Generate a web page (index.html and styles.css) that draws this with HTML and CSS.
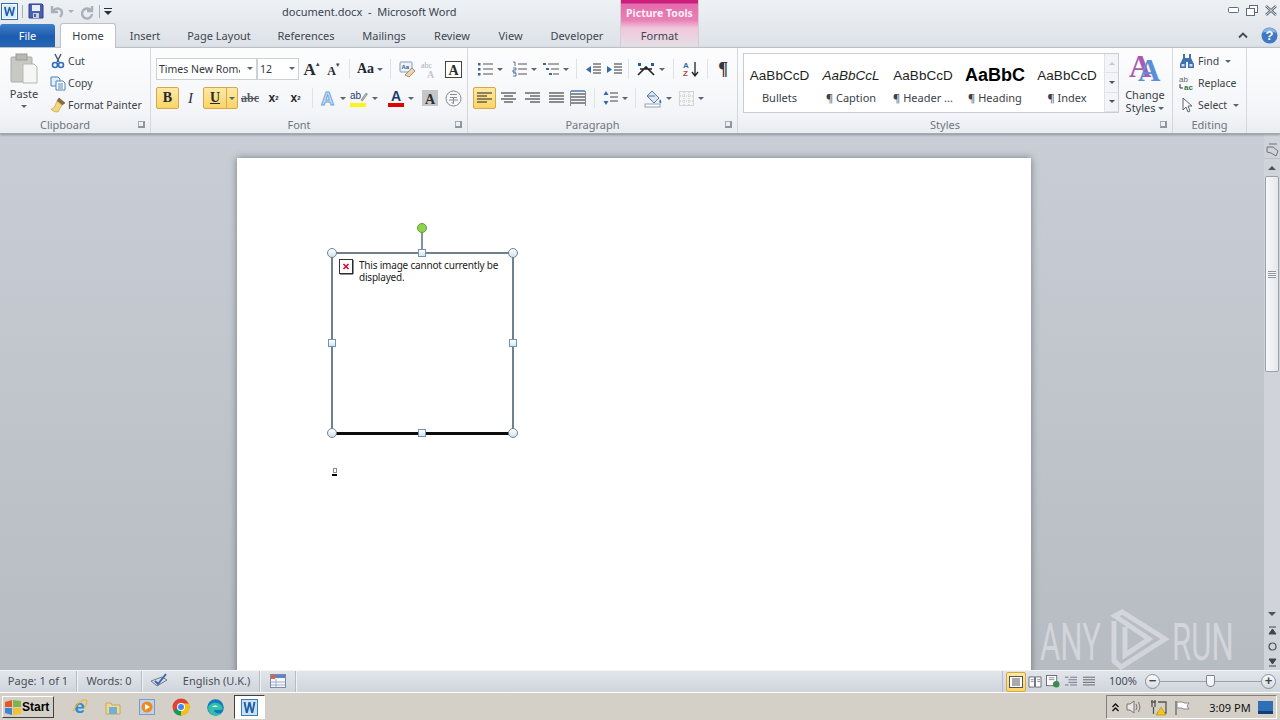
FILE: index.html
```html
<!DOCTYPE html>
<html lang="en">
<head>
    <meta charset="UTF-8">
    <title>document.docx - Microsoft Word</title>
    <link rel="stylesheet" href="styles.css">
</head>
<body>
    <div class="app">
        <div class="chrome">
            <div class="titlebar">
                <div class="qat">
                    <svg class="q-word" width="17" height="17" viewBox="0 0 17 17"><rect x=".5" y=".5" width="16" height="16" fill="#fff" stroke="#2a6fb5"/><rect x="2" y="2" width="13" height="13" fill="#dbe9f7"/><path d="M3 4l2 9h1.600L8.500 7l1.900 6H12l2-9h-1.700l-1.200 6-1.900-6H7.900L6 10 4.800 4z" fill="#1b5fa8"/></svg>
                    <span class="q-sep"></span>
                    <svg class="q-save" width="16" height="16" viewBox="0 0 16 16"><path d="M1 1h13l1 1v13H1z" fill="#4a5fb0" stroke="#2e3f86"/><rect x="4" y="2" width="8" height="6" fill="#e8eef8"/><rect x="5" y="10" width="6" height="5" fill="#c8d0e0"/><rect x="6" y="11" width="2" height="3" fill="#4a5fb0"/></svg>
                    <svg class="q-undo" width="15" height="15" viewBox="0 0 15 15"><path d="M2 2v6h6M3 7c3-4 9-3 9 2 0 2-1 3-2 4" fill="none" stroke="#a9b0b8" stroke-width="2.400"/></svg>
                    <span class="caret q-caret"></span>
                    <svg class="q-redo" width="15" height="15" viewBox="0 0 15 15"><path d="M12 2v5H7M11 6.500A5 5 0 1 0 12 10" fill="none" stroke="#a9b0b8" stroke-width="2.400"/></svg>
                    <span class="q-sep"></span>
                    <svg class="q-more" width="8" height="9" viewBox="0 0 8 9"><path d="M0 1h8v1H0zM0 4h8L4 8z" fill="#27303c"/></svg>
                </div>
                <div class="title">document.docx &nbsp;-&nbsp; Microsoft Word</div>
                <div class="window-btns">
                    <svg width="11" height="6" viewBox="0 0 11 6"><rect x=".5" y=".5" width="10" height="5" rx="1" fill="#fff" stroke="#5f6b7a"/></svg>
                    <svg width="12" height="11" viewBox="0 0 12 11"><rect x="3.500" y=".5" width="8" height="7" fill="#fff" stroke="#5f6b7a"/><rect x=".5" y="3.500" width="8" height="7" fill="#fff" stroke="#5f6b7a"/></svg>
                    <svg width="12" height="11" viewBox="0 0 12 11"><path d="M1 1l10 9M11 1L1 10" stroke="#5f6b7a" stroke-width="2.600"/><path d="M1 1l10 9M11 1L1 10" stroke="#fff" stroke-width=".8"/></svg>
                </div>
            </div>

            <div class="tabs">
                <div class="tab tab-file">File</div>
                <div class="tab tab-home">Home</div>
                <div class="tab tab-insert">Insert</div>
                <div class="tab tab-layout">Page Layout</div>
                <div class="tab tab-refs">References</div>
                <div class="tab tab-mail">Mailings</div>
                <div class="tab tab-review">Review</div>
                <div class="tab tab-view">View</div>
                <div class="tab tab-dev">Developer</div>
                <div class="tab tab-format">
                    <span class="context-label">Picture Tools</span>
                    <span>Format</span>
                </div>
                <div class="tabs-right">
                    <svg width="10" height="7" viewBox="0 0 10 7"><path d="M1 5.500l4-4 4 4" fill="none" stroke="#3f4a58" stroke-width="1.800"/></svg>
                    <svg width="17" height="17" viewBox="0 0 17 17"><circle cx="8.500" cy="8.500" r="8" fill="#3f79c6"/><path d="M8.500 1a7.500 7.500 0 0 1 7 5c-4-2-10-2-14 0a7.500 7.500 0 0 1 7-5z" fill="#8db6e6"/><text x="8.500" y="13" class="help-mark">?</text></svg>
                </div>
            </div>

            <div class="ribbon">
                <div class="group g-clip">
                    <div class="group-body clip-body">
                        <div class="big-btn paste">
                            <svg width="28" height="31" viewBox="0 0 28 31"><rect x="1" y="4" width="21" height="25" rx="1" fill="#c9c9c4" stroke="#aaa"/><rect x="6" y="1" width="11" height="6" fill="#b8b8b2" stroke="#999"/><path d="M13 11h11l3 3v16H13z" fill="#f6f6f4" stroke="#b5b5b5"/></svg>
                            <span>Paste</span>
                            <span class="caret"></span>
                        </div>
                        <div class="small-col">
                            <div class="small-btn"><svg width="16" height="16" viewBox="0 0 16 16"><path d="M5 1l4 8M11 1L7 9" stroke="#4c5a6c" stroke-width="1.500"/><circle cx="5" cy="12" r="2.500" fill="none" stroke="#2e6fc0" stroke-width="1.600"/><circle cx="11" cy="12" r="2.500" fill="none" stroke="#2e6fc0" stroke-width="1.600"/></svg><span>Cut</span></div>
                            <div class="small-btn"><svg width="16" height="16" viewBox="0 0 16 16"><path d="M1 2h7l2 2v7H1z" fill="#e4eefa" stroke="#4f81bd"/><path d="M6 6h7l2 2v7H6z" fill="#fff" stroke="#4f81bd"/><path d="M8 9h5M8 11h5M8 13h5" stroke="#4f81bd"/></svg><span>Copy</span></div>
                            <div class="small-btn"><svg width="16" height="16" viewBox="0 0 16 16"><path d="M9 1l6 5-3 2-5-4z" fill="#8b6a3e" stroke="#6a5030" stroke-width=".6"/><path d="M7 4l5 4-4 7c-3 0-6-1-7-3 3 0 4-3 6-8z" fill="#f2d67c" stroke="#b8923a" stroke-width=".6"/></svg><span>Format Painter</span></div>
                        </div>
                    </div>
                    <div class="group-label has-launcher">Clipboard<i class="launcher"></i></div>
                </div>

                <div class="group g-font">
                    <div class="group-body rows">
                        <div class="row">
                            <div class="combo combo-font"><span>Times New Roma</span><b class="caret"></b></div>
                            <div class="combo combo-size"><span>12</span><b class="caret"></b></div>
                            <div class="tb w26 glyph serif-b big">A<sup class="tiny">▲</sup></div>
                            <div class="tb w18 glyph serif-b small-a">A<sup class="tiny">▼</sup></div>
                            <span class="sep"></span>
                            <div class="tb w28 glyph serif-b mid">Aa<b class="caret"></b></div>
                            <span class="sep"></span>
                            <div class="tb w20"><svg width="17" height="17" viewBox="0 0 17 17"><rect x="1" y="1" width="12" height="10" rx="1" fill="#eef3fa" stroke="#7f9cc4"/><path d="M6 14l7-7 3 3-6 6z" fill="#e9d9a0" stroke="#a88"/><text x="2.500" y="8" class="nano">Aa</text></svg></div>
                            <div class="tb w24"><svg width="17" height="17" viewBox="0 0 17 17"><text x="0" y="7" class="pale-abc">abc</text><text x="6" y="17" class="pale-a">A</text></svg></div>
                            <div class="tb w24"><svg width="17" height="17" viewBox="0 0 17 17"><rect x=".5" y=".5" width="16" height="16" fill="#fff" stroke="#444"/><text x="8.500" y="13.500" class="boxed-a">A</text></svg></div>
                        </div>
                        <div class="row">
                            <div class="tb w23 on glyph serif-b">B</div>
                            <div class="tb w23 glyph italic">I</div>
                            <div class="tb w35 on split ml1"><u class="glyph serif-b">U</u><b class="split-arrow"><span class="caret"></span></b></div>
                            <div class="tb w24 glyph strike">abc</div>
                            <div class="tb w23 glyph boldx">x<sub>2</sub></div>
                            <div class="tb w21 glyph boldx">x<sup>2</sup></div>
                            <span class="sep"></span>
                            <div class="tb w26"><svg width="17" height="17" viewBox="0 0 17 17"><text x="8.500" y="15" class="glow-a">A</text></svg><b class="caret"></b></div>
                            <div class="tb w38"><svg width="18" height="18" viewBox="0 0 18 18"><text x="0" y="10" class="ab-mark">ab</text><path d="M11 11l5-7 1.500 1-5 7z" fill="#b4b4b4" stroke="#666" stroke-width=".5"/><rect y="14" width="16" height="4" fill="#fbf31b"/></svg><b class="caret"></b></div>
                            <div class="tb w36"><svg width="16" height="18" viewBox="0 0 16 18"><text x="8" y="12" class="color-a">A</text><rect y="14" width="16" height="4" fill="#e00000"/></svg><b class="caret"></b></div>
                            <div class="tb w22"><svg width="16" height="16" viewBox="0 0 16 16"><rect width="16" height="16" fill="#c6c6c6"/><text x="8" y="13.500" class="shade-a">A</text></svg></div>
                            <div class="tb w24"><svg width="17" height="17" viewBox="0 0 17 17"><circle cx="8.500" cy="8.500" r="7.500" fill="none" stroke="#8a8a8a"/><path d="M5 4.500h7M5 7.500h7M8.500 7.500v6l-2-1M4 10h9" fill="none" stroke="#8a8a8a"/></svg></div>
                        </div>
                    </div>
                    <div class="group-label has-launcher">Font<i class="launcher"></i></div>
                </div>

                <div class="group g-para">
                    <div class="group-body rows">
                        <div class="row">
                            <div class="tb w34"><svg width="15" height="14" viewBox="0 0 15 14"><path d="M5 2h10M5 7h10M5 12h10" stroke="#555"/><path d="M0 1h2.500v2.500H0zM0 6h2.500v2.500H0zM0 11h2.500v2.500H0z" fill="#40658f"/></svg><b class="caret"></b></div>
                            <div class="tb w34"><svg width="15" height="15" viewBox="0 0 15 15"><path d="M6 2h9M6 7h9M6 12h9" stroke="#555"/><path d="M1 0h2v4M1 6h3v2H1v2h3M1 11h3v3H1" fill="none" stroke="#40658f" stroke-width=".9"/></svg><b class="caret"></b></div>
                            <div class="tb w29"><svg width="16" height="15" viewBox="0 0 16 15"><path d="M5 2h11M8 7h8M10 12h6" stroke="#555"/><path d="M0 1h3v2H0zM3 6h3v2H3zM6 11h3v2H6z" fill="#40658f"/></svg><b class="caret"></b></div>
                            <span class="sep"></span>
                            <div class="tb w20"><svg width="16" height="13" viewBox="0 0 16 13"><path d="M8 1h8M8 4h8M8 7h8M8 10h8" stroke="#333" stroke-width="1.200"/><path d="M6 3L1 6.500 6 10z" fill="#2f6ab0"/></svg></div>
                            <div class="tb w22"><svg width="16" height="13" viewBox="0 0 16 13"><path d="M8 1h8M8 4h8M8 7h8M8 10h8" stroke="#333" stroke-width="1.200"/><path d="M1 3l5 3.500L1 10z" fill="#2f6ab0"/></svg></div>
                            <span class="sep sl3"></span>
                            <div class="tb w32"><svg width="18" height="14" viewBox="0 0 18 14"><path d="M1 13L9 5l8 8M3 7h12" fill="none" stroke="#222" stroke-width="1.600"/><path d="M1 1h3v3H1zM14 1h3v3h-3z" fill="#1f5fa8"/></svg><b class="caret"></b></div>
                            <span class="sep"></span>
                            <div class="tb w21"><svg width="16" height="16" viewBox="0 0 16 16"><text x="0" y="7" class="az-a">A</text><text x="0" y="15" class="az-z">Z</text><path d="M12 1v13M9 11l3 4 3-4" fill="none" stroke="#222" stroke-width="1.300"/></svg></div>
                            <span class="sep"></span>
                            <div class="tb w18 glyph pilcrow">¶</div>
                        </div>
                        <div class="row">
                            <div class="tb w23 on"><svg width="15" height="12" viewBox="0 0 15 12"><path d="M0 1h15M0 4h10M0 7h15M0 10h10" stroke="#222"/></svg></div>
                            <div class="tb w24"><svg width="15" height="12" viewBox="0 0 15 12"><path d="M0 1h15M3 4h9M0 7h15M3 10h9" stroke="#222"/></svg></div>
                            <div class="tb w24"><svg width="15" height="12" viewBox="0 0 15 12"><path d="M0 1h15M5 4h10M0 7h15M5 10h10" stroke="#222"/></svg></div>
                            <div class="tb w24"><svg width="15" height="12" viewBox="0 0 15 12"><path d="M0 1h15M0 4h15M0 7h15M0 10h15" stroke="#222"/></svg></div>
                            <div class="tb w20"><svg width="16" height="16" viewBox="0 0 16 16"><path d="M1 4h14M1 7h14M1 10h14M1 13h14" stroke="#222"/><path d="M1 1h14" stroke="#3a70b0" stroke-width="1.400"/><path d="M.5 1v15M15.500 1v15" stroke="#888"/></svg></div>
                            <span class="sep"></span>
                            <div class="tb w28"><svg width="15" height="16" viewBox="0 0 15 16"><path d="M7 3h8M7 7h8M7 11h8" stroke="#444"/><path d="M3 1L.5 5h5zM3 15L.5 11h5z" fill="#2f6ab0"/></svg><b class="caret"></b></div>
                            <span class="sep"></span>
                            <div class="tb w32"><svg width="18" height="17" viewBox="0 0 18 17"><path d="M8 1l7 7-5 5-7-7z" fill="#dfe7f2" stroke="#5577a8"/><path d="M3 6l8 0" stroke="#5577a8"/><path d="M16 9c1 2 2 3 1 4-2 1-2-2-1-4z" fill="#2e6fc0"/><rect x="1" y="14" width="15" height="3" fill="#fff" stroke="#90a0b4"/></svg><b class="caret"></b></div>
                            <div class="tb w34"><svg width="15" height="15" viewBox="0 0 15 15"><rect x=".5" y=".5" width="14" height="14" fill="#f6f6f6" stroke="#b5b5b5" stroke-dasharray="1 1"/><path d="M5 1v13M10 1v13M1 5h13M1 10h13" stroke="#c4c4c4" stroke-dasharray="1 1"/></svg><b class="caret"></b></div>
                        </div>
                    </div>
                    <div class="group-label has-launcher">Paragraph<i class="launcher"></i></div>
                </div>

                <div class="group g-styles">
                    <div class="group-body styles-body">
                        <div class="gallery">
                            <div class="style-item"><span class="preview">AaBbCcD</span><span class="style-name">Bullets</span></div>
                            <div class="style-item"><span class="preview caption">AaBbCcL</span><span class="style-name">¶ Caption</span></div>
                            <div class="style-item"><span class="preview">AaBbCcD</span><span class="style-name">¶ Header ...</span></div>
                            <div class="style-item"><span class="preview heading">AaBbC</span><span class="style-name">¶ Heading</span></div>
                            <div class="style-item"><span class="preview">AaBbCcD</span><span class="style-name">¶ Index</span></div>
                            <div class="gallery-scroll">
                                <span><i class="tri-up"></i></span>
                                <span><i class="tri-down"></i></span>
                                <span><i class="tri-more"></i></span>
                            </div>
                        </div>
                        <div class="big-btn change-styles">
                            <svg width="32" height="28" viewBox="0 0 32 28"><text x="0" y="23" class="aa-back">A</text><text x="9" y="27" class="aa-front">A</text></svg>
                            <span>Change</span>
                            <span>Styles <b class="caret"></b></span>
                        </div>
                    </div>
                    <div class="group-label has-launcher">Styles<i class="launcher"></i></div>
                </div>

                <div class="group g-edit">
                    <div class="group-body small-col">
                        <div class="small-btn"><svg width="16" height="14" viewBox="0 0 16 14"><path d="M4 0h2v4h4V0h2v4l3 6v4H9V8H7v6H1v-4l3-6z" fill="#3f6fb5"/><path d="M2.500 10h3v2.500h-3zM10.500 10h3v2.500h-3z" fill="#cfe0f5"/></svg><span>Find</span><b class="caret"></b></div>
                        <div class="small-btn"><svg width="16" height="16" viewBox="0 0 16 16"><text x="0" y="7" class="rep-ab">ab</text><text x="5" y="15" class="rep-ac">ac</text><path d="M1 9v4h3" fill="none" stroke="#333"/></svg><span>Replace</span></div>
                        <div class="small-btn"><svg width="16" height="16" viewBox="0 0 16 16"><path d="M4 1v12l3-3 2 5 2-1-2-5h4z" fill="#fff" stroke="#5a6470"/></svg><span>Select</span><b class="caret"></b></div>
                    </div>
                    <div class="group-label">Editing</div>
                </div>
            </div>
        </div>

        <div class="workspace">
            <div class="canvas">
                <div class="page">
                    <div class="picture">
                        <svg class="broken" width="15" height="15" viewBox="0 0 15 15"><rect x=".5" y=".5" width="13" height="14" fill="#fdfdfd" stroke="#333"/><path d="M14 1v14H1" fill="none" stroke="#222"/><path d="M4.500 5l5 5M9.500 5l-5 5" stroke="#d01030" stroke-width="1.600"/></svg>
                        <p class="alt-text">This image cannot currently be displayed.</p>
                        <i class="rotate-stem"></i>
                        <i class="rotate-handle"></i>
                        <i class="h-round h-tl"></i>
                        <i class="h-round h-tr"></i>
                        <i class="h-round h-bl"></i>
                        <i class="h-round h-br"></i>
                        <i class="h-square h-tm"></i>
                        <i class="h-square h-ml"></i>
                        <i class="h-square h-mr"></i>
                        <i class="h-square h-bm"></i>
                    </div>
                    <div class="para-mark"><i></i><b></b></div>
                </div>
                <svg class="watermark" width="194" height="62" viewBox="0 0 194 62">
                    <text x="0" y="50" class="wm-text" transform="translate(0 0) scale(.6 1)">ANY</text>
                    <path d="M74 11l0 40 7 6 44-28L82 2l-7 4 34 23-24 16V17" fill="none" stroke="#fff" stroke-opacity=".38" stroke-width="5"/>
                    <text x="0" y="50" class="wm-text" transform="translate(132 0) scale(.6 1)">RUN</text>
                </svg>
            </div>
            <div class="vscroll">
                <span class="ruler-toggle"><svg width="13" height="15" viewBox="0 0 13 15"><path d="M3 1h8M1 4h6l5 4-2 5-5-3-4-1z" fill="none" stroke="#6b7480"/></svg></span>
                <span class="sb-btn"><i class="sb-up"></i></span>
                <div class="sb-thumb"><i class="sb-grip"></i></div>
                <div class="sb-track"></div>
                <span class="sb-btn"><i class="sb-down"></i></span>
                <span class="sb-nav"><svg width="9" height="9" viewBox="0 0 9 9"><path d="M1 1h7M1 8l3.500-5L8 8z" fill="#3e4652" stroke="#3e4652"/></svg></span>
                <span class="sb-nav"><svg width="9" height="9" viewBox="0 0 9 9"><circle cx="4.500" cy="4.500" r="3.500" fill="none" stroke="#4a5360" stroke-width="1.200"/></svg></span>
                <span class="sb-nav"><svg width="9" height="9" viewBox="0 0 9 9"><path d="M1 8h7M1 1l3.500 5L8 1z" fill="#3e4652" stroke="#3e4652"/></svg></span>
            </div>
        </div>

        <div class="statusbar">
            <div class="st-cell st-page">Page: 1 of 1</div>
            <div class="st-cell st-words">Words: 0</div>
            <div class="st-cell st-proof"><svg width="18" height="16" viewBox="0 0 18 16"><path d="M1 8l11-4 5 3-10 6z" fill="#d8dde6" stroke="#6f7c90"/><path d="M5 8l3 3 8-10" fill="none" stroke="#3a68a8" stroke-width="2"/></svg></div>
            <div class="st-cell st-lang">English (U.K.)</div>
            <div class="st-cell st-macro"><svg width="16" height="14" viewBox="0 0 16 14"><rect x=".5" y=".5" width="15" height="13" fill="#f8f8fb" stroke="#7b8aa8"/><rect x="1" y="1" width="14" height="3" fill="#5f86c4"/><path d="M6 5v8M1 8h14M1 11h14" stroke="#9fb0cc"/><rect x="1" y="1" width="4" height="4" fill="#e2603a"/></svg></div>
            <div class="st-fill"></div>
            <div class="view-btns">
                <span class="view-btn on"><svg width="14" height="12" viewBox="0 0 14 12"><rect x=".5" y=".5" width="13" height="11" fill="#fff" stroke="#555"/><path d="M3 3h8M3 5h8M3 7h8M3 9h8" stroke="#555"/></svg></span>
                <span class="view-btn"><svg width="14" height="12" viewBox="0 0 15 13"><path d="M1 1h6v11H1zM8 1h6v11H8z" fill="#fff" stroke="#667"/><path d="M3 4h3M3 6h3M10 4h3M10 6h3" stroke="#889"/></svg></span>
                <span class="view-btn"><svg width="14" height="13" viewBox="0 0 15 14"><rect x=".5" y=".5" width="11" height="11" fill="#fff" stroke="#667"/><path d="M3 3h6M3 5h6" stroke="#889"/><circle cx="11" cy="10" r="3.500" fill="#3c8a4c"/></svg></span>
                <span class="view-btn"><svg width="12" height="11" viewBox="0 0 14 12"><path d="M0 1h4M4 4h10M4 7h10M0 10h4M6 1h8M6 10h8" stroke="#667"/></svg></span>
                <span class="view-btn"><svg width="12" height="11" viewBox="0 0 14 12"><path d="M0 1h14M0 4h14M0 7h14M0 10h14" stroke="#555"/></svg></span>
            </div>
            <div class="zoom-pct">100%</div>
            <div class="zoom-round">−</div>
            <div class="zoom-track"><i class="zoom-thumb"></i></div>
            <div class="zoom-round">+</div>
        </div>

        <div class="taskbar">
            <div class="start"><svg width="17" height="15" viewBox="0 0 17 15"><path d="M1 2l7-2v7H1z" fill="#e2582c"/><path d="M9 0l8 1v6H9z" fill="#7ab648"/><path d="M1 8h7v7l-7-2z" fill="#3f83d6"/><path d="M9 8h8v6l-8 1z" fill="#f2c230"/></svg><span>Start</span></div>
            <div class="launch ie"><svg width="17" height="18" viewBox="0 0 17 18"><text x="8.500" y="15" class="ie-e">e</text><path d="M2 13C6 5 12 1 15 2c2 1 0 5-2 8" fill="none" stroke="#f0b429" stroke-width="1.200"/></svg></div>
            <div class="launch folder"><svg width="16" height="15" viewBox="0 0 16 15"><path d="M1 3h5l1 2h8v9H1z" fill="#f0d890" stroke="#c4a860"/><rect x="4" y="7" width="8" height="7" fill="#6fb0d8"/></svg></div>
            <div class="launch media"><svg width="16" height="16" viewBox="0 0 16 16"><rect x=".5" y=".5" width="15" height="15" fill="#bcd2ee" stroke="#7c9cc8"/><circle cx="8" cy="8" r="5.500" fill="#f08a1d"/><path d="M6 5l5 3-5 3z" fill="#fff"/></svg></div>
            <div class="launch chrome-icon"><svg width="18" height="18" viewBox="0 0 18 18"><circle cx="9" cy="9" r="8.500" fill="#db4437"/><path d="M9 9L1.500 13a8.500 8.500 0 0 0 8 4.500z" fill="#0f9d58"/><path d="M9 9l0 8.500A8.500 8.500 0 0 0 16.800 5.500H9z" fill="#f4c20d"/><circle cx="9" cy="9" r="4" fill="#fff"/><circle cx="9" cy="9" r="3" fill="#4285f4"/></svg></div>
            <div class="launch edge"><svg width="17" height="17" viewBox="0 0 17 17"><circle cx="8.500" cy="8.500" r="8.300" fill="#1577c0"/><path d="M1 9c1-5 9-7 13-3 2 2 2 5 0 5H7c0 3 4 4 8 3a8 8 0 0 1-14-5z" fill="#30c0a8"/><path d="M5 8c1-2 5-2 6 0z" fill="#fff" opacity=".8"/></svg></div>
            <div class="task-word"><svg width="17" height="17" viewBox="0 0 17 17"><rect width="17" height="17" fill="#cfe0f2"/><rect x=".5" y=".5" width="16" height="16" fill="none" stroke="#3a7dbf"/><path d="M2.500 3l2.300 11h2L8.500 7l1.700 7h2L14.500 3h-2l-1.300 7.500L9.500 3h-2L5.800 10.500 4.500 3z" fill="#1b5fa8"/></svg></div>
            <div class="tray">
                <svg class="tray-up" width="7" height="9" viewBox="0 0 7 9"><path d="M.5 4l3-3 3 3M.5 8l3-3 3 3" fill="none" stroke="#111" stroke-width="1.300"/></svg>
                <svg width="16" height="14" viewBox="0 0 16 14"><path d="M1 4h3l4-3v12l-4-3H1z" fill="#e8e8e4" stroke="#777"/><path d="M10 4q2 3 0 6M12.500 2q3 5 0 10" fill="none" stroke="#777"/></svg>
                <svg width="17" height="17" viewBox="0 0 17 17"><path d="M2 1v7M5 1v7M1 3h5M3.500 8v7M8 3h8v11H7" fill="none" stroke="#555" stroke-width="1.300"/><path d="M11 8l5 8H6z" fill="#f5c518" stroke="#a98a10" stroke-width=".6"/></svg>
                <svg width="16" height="15" viewBox="0 0 16 15"><path d="M2 1v14" stroke="#777" stroke-width="1.500"/><path d="M3 2h6l1 1h5l-2 3 2 3h-6L8 8H3z" fill="#fff" stroke="#888"/></svg>
                <span class="clock">3:09 PM</span>
                <svg width="15" height="13" viewBox="0 0 15 13"><rect width="15" height="13" fill="#2e6fb7"/><rect y="10" width="15" height="3" fill="#123e78"/></svg>
            </div>
        </div>
    </div>
</body>
</html>
```

FILE: styles.css
```css
* {
    box-sizing: border-box;
}

html, body {
    margin: 0;
    padding: 0;
    height: 100%;
    overflow: hidden;
}

body {
    font-family: "Noto Sans", "Liberation Sans", sans-serif;
    font-size: 11px;
    color: #3c4148;
}

svg {
    display: block;
    flex: none;
    overflow: visible;
}

.app {
    width: 1280px;
    height: 720px;
    display: flex;
    flex-direction: column;
}

.caret {
    display: inline-block;
    width: 0;
    height: 0;
    border-left: 3px solid transparent;
    border-right: 3px solid transparent;
    border-top: 3px solid #5b6470;
    flex: none;
}

/* title bar and tabs */
.chrome {
    background: linear-gradient(#eef1f4, #dde2e8 47px);
}

.titlebar {
    height: 22px;
    display: flex;
    align-items: center;
    position: relative;
}

.qat {
    display: flex;
    align-items: center;
    padding-left: 1px;
    width: 282px;
    height: 22px;
}

.q-sep {
    width: 1px;
    height: 13px;
    background: #a8adb3;
    margin: 0 5px 0 4px;
}

.q-undo {
    margin-left: 6px;
}

.q-caret {
    margin: 0 6px 0 3px;
    border-top-color: #a9b0b8;
}

.q-more {
    margin-left: -1px;
}

.title {
    font-size: 11px;
    color: #3b4350;
}

.window-btns {
    margin-left: auto;
    display: flex;
    align-items: center;
    gap: 7px;
    padding: 0 3px 2px 0;
}

.tabs {
    height: 25px;
    display: flex;
    align-items: flex-end;
    position: relative;
}

.tab {
    height: 23px;
    display: flex;
    align-items: center;
    justify-content: center;
    color: #3f4650;
    flex: none;
}

.tab-file {
    width: 55px;
    margin-right: 5px;
    background: linear-gradient(#3f7fcb, #1d5cac 55%, #2667b8);
    border-radius: 3px 3px 0 0;
    color: #fff;
}

.tab-home {
    width: 56px;
    height: 25px;
    padding-bottom: 2px;
    background: linear-gradient(#fdfdfe, #fff);
    border: 1px solid #bcc1c8;
    border-bottom: 0;
    border-radius: 3px 3px 0 0;
    color: #33383f;
    margin-bottom: -1px;
    position: relative;
    z-index: 1;
}

.tab-insert { width: 58px; }
.tab-layout { width: 90px; }
.tab-refs { width: 84px; }
.tab-mail { width: 72px; }
.tab-review { width: 64px; }
.tab-view { width: 53px; }
.tab-dev { width: 80px; }

/* the contextual tab runs up through the title bar */
.tab-format {
    position: absolute;
    left: 620px;
    bottom: 0;
    width: 79px;
    height: 47px;
    flex-direction: column;
    justify-content: flex-start;
    background: linear-gradient(#cc1f7d 0, #cc1f7d 3px, #e56cab 4px, #e77fb6 20px, #f0c6dc 28px, #e4e0e4 47px);
    border-left: 1px solid #d3cdd4;
    border-right: 1px solid #d3cdd4;
}

.context-label {
    height: 25px;
    padding-top: 6px;
    font-weight: 700;
    font-size: 10.500px;
    color: #fdeef6;
    margin-bottom: 3px;
}

.tabs-right {
    position: absolute;
    right: 2px;
    top: 5px;
    display: flex;
    align-items: center;
    gap: 13px;
}

.help-mark {
    font: 700 13px "Liberation Sans", sans-serif;
    fill: #fff;
    text-anchor: middle;
}

/* ribbon */
.ribbon {
    height: 87px;
    display: flex;
    background: linear-gradient(#fdfdfe, #f3f5f8 65px, #e9ecf0);
    border-top: 1px solid #bcc1c8;
    border-bottom: 1px solid #a4a9b0;
    box-shadow: 0 1px 2px rgba(70, 75, 85, .45);
    position: relative;
}

.group {
    display: flex;
    flex-direction: column;
    border-right: 1px solid #d4d8de;
    flex: none;
}

.g-clip { width: 151px; }
.g-font { width: 317px; }
.g-para { width: 270px; }
.g-styles { width: 435px; }
.g-edit { width: 74px; }

.group-body {
    height: 70px;
}

.rows {
    padding: 10px 0 0 5px;
    display: flex;
    flex-direction: column;
    gap: 7px;
}

.row {
    display: flex;
    align-items: center;
    height: 22px;
}

.group-label {
    height: 16px;
    line-height: 16px;
    text-align: center;
    color: #70767e;
    position: relative;
}

.has-launcher {
    padding-right: 20px;
}

.launcher {
    position: absolute;
    right: 5px;
    top: 4px;
    width: 7px;
    height: 7px;
    border-left: 1px solid #a5abb3;
    border-top: 1px solid #a5abb3;
    border-right: 2px solid #8e959e;
    border-bottom: 2px solid #8e959e;
}

.clip-body {
    display: flex;
    padding-left: 3px;
}

.big-btn {
    display: flex;
    flex-direction: column;
    align-items: center;
}

.paste {
    width: 42px;
    padding-top: 5px;
    line-height: 13px;
}

.paste svg {
    margin-bottom: 3px;
}

.paste .caret {
    margin-top: 5px;
}

.small-col {
    padding: 2px 0 0 5px;
    display: flex;
    flex-direction: column;
}

.small-btn {
    height: 22px;
    display: flex;
    align-items: center;
    gap: 2px;
    white-space: nowrap;
    font-size: 10.500px;
}

.g-edit .small-col {
    padding-left: 6px;
}

.g-edit .small-btn {
    gap: 3px;
}

.g-edit .caret {
    margin-left: 3px;
}

.combo {
    height: 22px;
    background: #fff;
    border: 1px solid #cdd1d6;
    display: flex;
    align-items: center;
    padding: 0 0 1px 2px;
    color: #33383f;
    font-size: 10.500px;
    overflow: hidden;
    position: relative;
    flex: none;
}

.combo span {
    white-space: nowrap;
}

.combo .caret {
    position: absolute;
    right: 3px;
    top: 8px;
    background: #fff;
    box-shadow: -3px 0 0 4px #fff;
}

.combo-font { width: 101px; }
.combo-size { width: 42px; }

.tb {
    height: 22px;
    display: flex;
    align-items: center;
    justify-content: center;
    flex: none;
    gap: 4px;
    color: #2c2f33;
}

.w18 { width: 18px; }
.w20 { width: 20px; }
.w21 { width: 21px; }
.w22 { width: 22px; }
.w23 { width: 23px; }
.w24 { width: 24px; }
.w26 { width: 26px; }
.w28 { width: 28px; }
.w29 { width: 29px; }
.w32 { width: 32px; }
.w34 { width: 34px; }
.w35 { width: 35px; }
.w36 { width: 36px; }
.w38 { width: 38px; }
.ml1 { margin-left: 1px; }

.on {
    background: linear-gradient(#fde9a4, #fbd468);
    border: 1px solid #d5a84c;
    border-radius: 2px;
}

.sep {
    width: 1px;
    height: 20px;
    background: #dfe2e6;
    margin: 0 6px;
    flex: none;
}

.sl3 {
    margin-left: 3px;
}

.split {
    justify-content: flex-start;
    gap: 0;
}

.split u {
    width: 22px;
    text-align: center;
}

.split-arrow {
    height: 20px;
    flex: 1;
    display: flex;
    align-items: center;
    justify-content: center;
    border-left: 1px solid #d5a84c;
}

.glyph {
    font-family: "Liberation Serif", serif;
    font-size: 14px;
    line-height: 1;
}

.serif-b {
    font-weight: 700;
    color: #26292d;
}

.big {
    font-size: 17px;
    gap: 0;
}

.small-a {
    font-size: 12px;
    gap: 0;
    padding-top: 3px;
}

.mid {
    font-size: 14px;
    gap: 0;
}

.mid .caret {
    margin-left: 3px;
}

.tiny {
    font-size: 6px;
    margin-left: -1px;
    align-self: flex-start;
    margin-top: 3px;
    color: #444;
}

.small-a .tiny {
    margin-top: 1px;
}

.pale-abc {
    font: 8px "Liberation Serif", serif;
    fill: #a9aeb5;
}

.pale-a {
    font: 700 10px "Liberation Serif", serif;
    fill: #c2c6cb;
}

.italic {
    font-style: italic;
    font-size: 15px;
}

.strike {
    text-decoration: line-through;
    font-weight: 700;
    font-size: 12px;
    color: #55595f;
}

.boldx {
    font-family: "Liberation Sans", sans-serif;
    font-weight: 700;
    font-size: 12px;
    gap: 0;
    color: #26292d;
}

.boldx sub, .boldx sup {
    font-size: 6px;
    line-height: 1;
}

.pilcrow {
    font-size: 18px;
    font-weight: 700;
    color: #33373c;
}

.nano {
    font: 700 6px "Liberation Sans", sans-serif;
    fill: #36568c;
}

.boxed-a, .shade-a {
    font: 700 14px "Liberation Serif", serif;
    text-anchor: middle;
    fill: #2b2b2b;
}

.glow-a {
    font: 700 18px "Liberation Sans", sans-serif;
    text-anchor: middle;
    fill: #d3e4f7;
    stroke: #6ea4dd;
    stroke-width: 1;
}

.ab-mark {
    font: 10px "Liberation Sans", sans-serif;
    fill: #2a3c70;
}

.color-a {
    font: 700 14px "Liberation Sans", sans-serif;
    text-anchor: middle;
    fill: #23396b;
}

.az-a, .az-z {
    font: 700 8px "Liberation Sans", sans-serif;
}

.az-a { fill: #2f6ab0; }
.az-z { fill: #b0473a; }

/* styles gallery */
.styles-body {
    display: flex;
    padding: 5px 0 0 5px;
}

.gallery {
    width: 376px;
    height: 60px;
    display: flex;
    background: #fff;
    border: 1px solid #c9cdd3;
    flex: none;
}

.style-item {
    width: 72px;
    flex: none;
    display: flex;
    flex-direction: column;
    align-items: center;
    color: #3c4148;
}

.style-item:first-child {
    width: 71px;
}

.preview {
    height: 33px;
    padding-top: 13px;
    font: 13.500px/18px "Liberation Sans", sans-serif;
    color: #1d1f22;
    white-space: nowrap;
}

.caption {
    font-style: italic;
}

.heading {
    font-size: 18px;
    font-weight: 700;
    color: #000;
    padding-top: 12px;
}

.style-name {
    margin-top: 3px;
    line-height: 15px;
}

.gallery-scroll {
    margin-left: auto;
    width: 14px;
    height: 58px;
    display: flex;
    flex-direction: column;
    border-left: 1px solid #dfe2e6;
    background: #f3f4f7;
}

.gallery-scroll span {
    flex: 1;
    display: flex;
    align-items: center;
    justify-content: center;
    border-bottom: 1px solid #dfe2e6;
}

.tri-up, .tri-down, .tri-more {
    width: 0;
    height: 0;
    border-left: 3px solid transparent;
    border-right: 3px solid transparent;
}

.tri-up { border-bottom: 3px solid #c3c7cd; }
.tri-down, .tri-more { border-top: 3px solid #4d5560; }
.tri-more { box-shadow: 0 -3px 0 -2px #4d5560; }

.change-styles {
    width: 52px;
    padding-top: 1px;
    line-height: 13px;
}

.change-styles svg {
    margin-bottom: 6px;
}

.change-styles .caret {
    vertical-align: 2px;
}

.aa-back, .aa-front {
    font: 700 31px "Liberation Serif", serif;
}

.aa-back { fill: #a85cb0; }
.aa-front { fill: #5a8fd8; }

.rep-ab {
    font: 8px "Liberation Sans", sans-serif;
    fill: #666;
}

.rep-ac {
    font: 700 8px "Liberation Sans", sans-serif;
    fill: #2a7a40;
}

/* document area */
.workspace {
    flex: 1;
    min-height: 0;
    display: flex;
    background: linear-gradient(#c9cdd5, #b7bbc2);
}

.canvas {
    flex: 1;
    position: relative;
    overflow: hidden;
    padding: 24px 0 0 237px;
}

.page {
    width: 794px;
    height: 700px;
    background: #fff;
    box-shadow: 0 0 7px rgba(50, 55, 65, .55);
    padding: 94px 0 0 94px;
}

.picture {
    width: 183px;
    height: 183px;
    border: 2px solid #70808f;
    border-bottom: 3px solid #0c0c0c;
    position: relative;
    display: flex;
    padding: 5px 0 0 6px;
    gap: 5px;
}

.alt-text {
    margin: 0;
    width: 155px;
    font-size: 10px;
    letter-spacing: -.2px;
    line-height: 12px;
    color: #1c1c1c;
}

.h-round, .h-square, .rotate-handle, .rotate-stem {
    position: absolute;
}

.h-round {
    width: 10px;
    height: 10px;
    border-radius: 50%;
    background: linear-gradient(#fff, #cfe2ee);
    border: 1px solid #6f8494;
}

.h-square {
    width: 8px;
    height: 8px;
    background: linear-gradient(#fff, #cfe6f4);
    border: 1px solid #6f93b0;
}

.h-tl { left: -6px; top: -6px; }
.h-tr { right: -6px; top: -6px; }
.h-bl { left: -6px; bottom: -6px; }
.h-br { right: -6px; bottom: -6px; }
.h-tm { left: 85px; top: -5px; }
.h-bm { left: 85px; bottom: -5px; }
.h-ml { left: -5px; top: 85px; }
.h-mr { right: -5px; top: 85px; }

.rotate-stem {
    left: 88px;
    top: -22px;
    width: 2px;
    height: 20px;
    background: #7f93a5;
}

.rotate-handle {
    left: 84px;
    top: -31px;
    width: 10px;
    height: 10px;
    border-radius: 50%;
    background: #8fd44c;
    border: 1px solid #5e9a38;
}

.para-mark {
    margin: 33px 0 0 1px;
    width: 6px;
}

.para-mark i {
    display: block;
    width: 4px;
    height: 5px;
    margin-left: 1px;
    border: 1px solid #8a8a8a;
}

.para-mark b {
    display: block;
    width: 5px;
    height: 2px;
    margin-top: 1px;
    background: #000;
}

.watermark {
    position: absolute;
    left: 1040px;
    top: 476px;
}

.wm-text {
    font: 400 52px Roboto, "Liberation Sans", sans-serif;
    fill: #fff;
    fill-opacity: .38;
}

.vscroll {
    width: 16px;
    display: flex;
    flex-direction: column;
    align-items: center;
    background: #d0d4da;
    flex: none;
}

.ruler-toggle {
    height: 25px;
    padding-top: 9px;
    border-bottom: 1px solid #bdc2c9;
    width: 100%;
    display: flex;
    justify-content: center;
}

.sb-btn {
    height: 17px;
    width: 100%;
    display: flex;
    align-items: center;
    justify-content: center;
}

.sb-up, .sb-down {
    width: 0;
    height: 0;
    border-left: 4px solid transparent;
    border-right: 4px solid transparent;
}

.sb-up { border-bottom: 4px solid #4a5360; }
.sb-down { border-top: 4px solid #4a5360; }

.sb-thumb {
    width: 14px;
    height: 196px;
    background: linear-gradient(90deg, #f7f8fa, #e4e7eb);
    border: 1px solid #9aa2ac;
    border-radius: 2px;
    flex: none;
    display: flex;
    align-items: center;
    justify-content: center;
}

.sb-grip {
    width: 8px;
    height: 7px;
    background: repeating-linear-gradient(#8c949e 0 1px, #f7f8fa 1px 2px);
}

.sb-track {
    flex: 1;
}

.sb-nav {
    height: 16px;
    display: flex;
    align-items: center;
    justify-content: center;
}

/* status bar */
.statusbar {
    height: 22px;
    display: flex;
    align-items: center;
    background: linear-gradient(#e2e6eb, #cfd5dc);
    border-top: 1px solid #f4f5f7;
    color: #4a5058;
    flex: none;
}

.st-cell {
    height: 100%;
    padding-bottom: 2px;
    display: flex;
    align-items: center;
    justify-content: center;
    border-right: 1px solid #b6bcc4;
    box-shadow: 1px 0 0 #eff1f3;
    white-space: nowrap;
}

.st-page { width: 77px; }
.st-words { width: 65px; }
.st-proof { width: 32px; border-right: 0; box-shadow: none; justify-content: flex-start; padding-left: 8px; }
.st-lang { width: 86px; }
.st-macro { width: 36px; }

.st-fill {
    flex: 1;
}

.view-btns {
    display: flex;
    align-items: center;
    height: 100%;
    border-left: 1px solid #b6bcc4;
    padding: 0 2px 0 3px;
}

.view-btn {
    width: 18px;
    height: 20px;
    display: flex;
    align-items: center;
    justify-content: center;
}

.view-btn.on {
    width: 20px;
    background: linear-gradient(#fde9a4, #fbd468);
    border: 1px solid #d5a84c;
}

.zoom-pct {
    width: 45px;
    padding: 0 0 2px 1px;
    text-align: center;
}

.zoom-round {
    width: 15px;
    height: 15px;
    border-radius: 50%;
    border: 1px solid #87909b;
    background: linear-gradient(#fbfbfc, #d6dae0);
    font: 700 13px/12px "Liberation Sans", sans-serif;
    text-align: center;
    color: #3f4650;
    flex: none;
}

.zoom-round:last-child {
    margin-right: 4px;
}

.zoom-track {
    width: 101px;
    height: 1px;
    background: #9aa1aa;
    position: relative;
}

.zoom-thumb {
    position: absolute;
    left: 46px;
    top: -6px;
    width: 9px;
    height: 12px;
    background: #f5f6f8;
    border: 1px solid #7d8692;
    border-radius: 1px 1px 4px 4px;
}

/* taskbar */
.taskbar {
    height: 28px;
    display: flex;
    align-items: center;
    background: #d4d0c8;
    border-top: 1px solid #fff;
    flex: none;
    padding: 1px 3px 0 2px;
}

.start {
    width: 52px;
    height: 22px;
    display: flex;
    align-items: center;
    gap: 1px;
    padding-left: 1px;
    border: 1px solid;
    border-color: #fff #404040 #404040 #fff;
    font: 700 12px "Liberation Sans", sans-serif;
    color: #000;
    flex: none;
}

.launch {
    display: flex;
    justify-content: center;
    flex: none;
    width: 34px;
}

.ie { margin-left: 8px; }

.ie-e {
    font: 700 19px "Liberation Sans", sans-serif;
    fill: #2e8bd8;
    text-anchor: middle;
}

.task-word {
    width: 31px;
    height: 24px;
    margin-left: 2px;
    display: flex;
    align-items: center;
    justify-content: center;
    background: #fff;
    border: 1px solid;
    border-color: #404040 #fff #fff #404040;
    flex: none;
}

.tray {
    margin-left: auto;
    width: 171px;
    height: 24px;
    display: flex;
    align-items: center;
    border: 1px solid;
    border-color: #808080 #fff #fff #808080;
    padding: 0 3px 0 5px;
    justify-content: space-between;
    color: #1a1a1a;
}

.clock {
    font-size: 11px;
    color: #111;
    margin-left: 12px;
}
```
